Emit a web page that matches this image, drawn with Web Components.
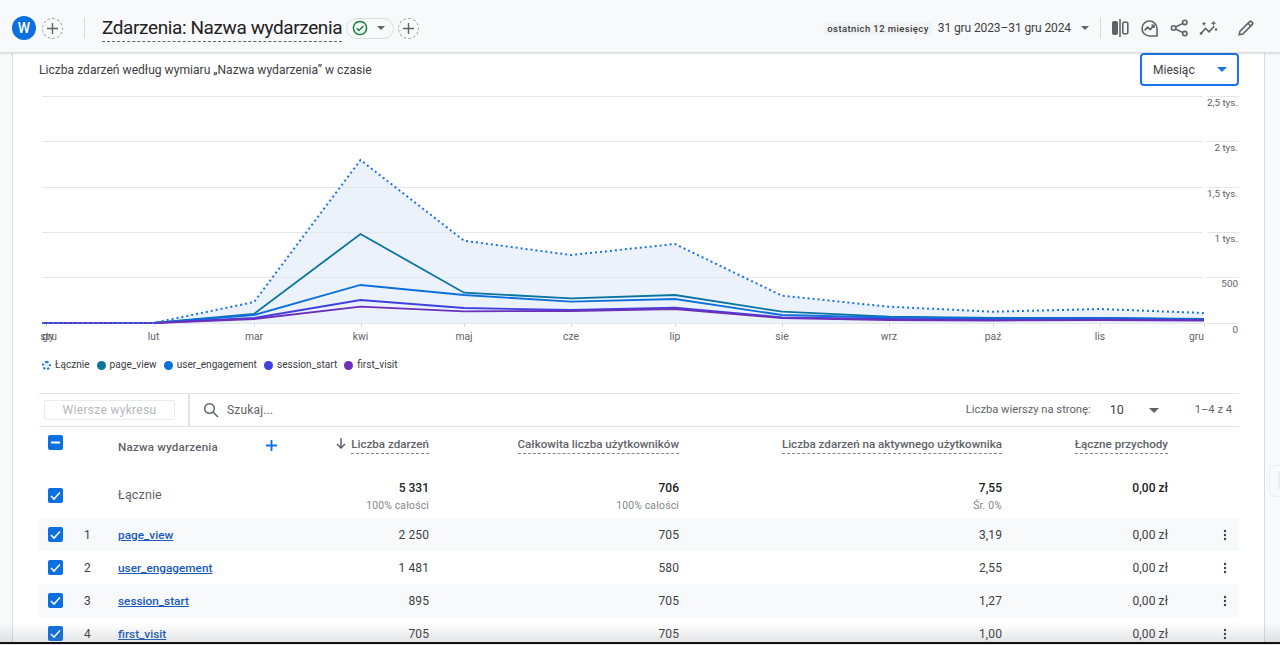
<!DOCTYPE html>
<html lang="pl">
<head>
<meta charset="utf-8">
<title>Zdarzenia</title>
<style>
  html, body { margin: 0; height: 100%; overflow: hidden; background: #f8f9fa; }
  body { font-family: Roboto, "Liberation Sans", sans-serif; color: #3c4043; }
</style>
</head>
<body>
<ga-app>
  <ga-header slot="header"></ga-header>
  <ga-card>
    <ga-chart-head>Liczba zdarzeń według wymiaru „Nazwa wydarzenia” w czasie</ga-chart-head>
    <ga-chart></ga-chart>
    <ga-legend></ga-legend>
    <ga-toolbar></ga-toolbar>
    <ga-table-head></ga-table-head>
    <ga-total-row events="5 331" users="706" rate="7,55" revenue="0,00 zł"></ga-total-row>
    <ga-row rank="1" events="2 250" users="705" rate="3,19" revenue="0,00 zł">page_view</ga-row>
    <ga-row rank="2" events="1 481" users="580" rate="2,55" revenue="0,00 zł">user_engagement</ga-row>
    <ga-row rank="3" events="895" users="705" rate="1,27" revenue="0,00 zł">session_start</ga-row>
    <ga-row rank="4" events="705" users="705" rate="1,00" revenue="0,00 zł">first_visit</ga-row>
  </ga-card>
</ga-app>

<script>
const COLUMNS = '40px 39px 162px 149px 250px 323px 166px 71px';
const caret = (c = '#5f6368') => `<svg width="10" height="5" viewBox="0 0 10 5"><path d="M0 0h10L5 5z" fill="${c}"/></svg>`;

class GaApp extends HTMLElement {
    constructor() {
        super();
        this.attachShadow({ mode: 'open' }).innerHTML = `
        <style>
            :host { display: flex; flex-direction: column; height: 645px; position: relative; overflow: hidden; }
            main { flex: 1; display: flex; padding: 0 15px 0 12px; min-height: 0; }
            .fade { position: absolute; left: 0; right: 0; bottom: 0; height: 22px;
                background: linear-gradient(rgba(120,124,130,0) 0, rgba(120,124,130,.2) 19px, #111 19.5px, #111 21px, #e8e8e8 21px); }
            .tab { position: absolute; right: 0; top: 465px; width: 11px; height: 32px; box-sizing: border-box; padding: 5px 0 7px 8px;
                border: 1px solid #eceef0; border-right: 0; border-radius: 6px 0 0 6px; }
            .tab i { display: block; height: 100%; background: #eceef0; }
        </style>
        <slot name="header"></slot>
        <main><slot></slot></main>
        <div class="tab"><i></i></div>
        <div class="fade"></div>`;
    }
}

class GaPlus extends HTMLElement {
    constructor() {
        super();
        this.attachShadow({ mode: 'open' }).innerHTML = `
        <style>
            :host { display: flex; align-items: center; justify-content: center; width: 21px; height: 21px; box-sizing: border-box;
                border: 1px dashed #9aa0a6; border-radius: 50%; }
        </style>
        <svg width="13" height="13" viewBox="0 0 13 13"><path d="M6.500 1v11M1 6.500h11" stroke="#5f6368" stroke-width="1.400" fill="none"/></svg>`;
    }
}

class GaHeader extends HTMLElement {
    constructor() {
        super();
        this.attachShadow({ mode: 'open' }).innerHTML = `
        <style>
            :host { display: flex; align-items: center; height: 53px; box-sizing: border-box; padding: 4px 0 0 12px;
                background: #f8f9fa; border-bottom: 1px solid #dadce0; box-shadow: 0 1px 2px rgba(60,64,67,.15); position: relative; z-index: 2; }
            .avatar { width: 24px; height: 24px; border-radius: 50%; background: #0b6fe0; color: #fff; font: 500 14px/24px Roboto, sans-serif; text-align: center; }
            ga-plus { margin-left: 6px; }
            .div { width: 1px; height: 20px; background: #dadce0; }
            .div.a { margin: 0 17px 0 21px; }
            .title { font: 400 19px/26px Roboto, sans-serif; color: #202124; border-bottom: 1px dashed #5f6368; margin-top: 1px; letter-spacing: -.4px; white-space: nowrap; }
            .pill { display: flex; align-items: center; width: 48px; height: 21px; box-sizing: border-box; margin-left: 4px; padding-left: 5px;
                border: 1px solid #dadce0; border-radius: 11px; }
            .pill svg:last-child { margin-left: 9px; }
            .pill + ga-plus { margin-left: 4px; }
            .right { margin-left: auto; display: flex; align-items: center; }
            .chip { font: 500 9.500px/13px Roboto, sans-serif; letter-spacing: .4px; background: #f1f3f4; color: #3c4043; padding: 0 3px; white-space: nowrap; }
            .date { font: 400 12px/16px Roboto, sans-serif; letter-spacing: -.1px; color: #3c4043; margin-left: 6px; white-space: nowrap; }
            .caret { margin: 0 11px 0 10px; display: flex; }
            .icons { display: flex; align-items: center; padding-right: 26px; }
            .icons svg { display: block; fill: none; stroke: #5f6368; stroke-width: 1.600; }
            .i1 { margin-left: 11px; } .i2 { margin-left: 12px; } .i3 { margin-left: 12px; } .i4 { margin-left: 10px; } .i5 { margin-left: 20px; }
        </style>
        <div class="avatar">W</div>
        <ga-plus></ga-plus>
        <div class="div a"></div>
        <div class="title">Zdarzenia: Nazwa wydarzenia</div>
        <div class="pill">
            <svg width="16" height="16" viewBox="0 0 16 16" fill="none"><circle cx="8" cy="8" r="6.600" stroke="#188038" stroke-width="1.500"/><path d="M4.700 8.200l2.300 2.300 4.300-4.500" stroke="#188038" stroke-width="1.500"/></svg>
            <svg width="8" height="4" viewBox="0 0 8 4"><path d="M0 0h8L4 4z" fill="#5f6368"/></svg>
        </div>
        <ga-plus></ga-plus>
        <div class="right">
            <span class="chip">ostatnich 12 miesięcy</span>
            <span class="date">31 gru 2023–31 gru 2024</span>
            <span class="caret"><svg width="8" height="4" viewBox="0 0 8 4"><path d="M0 0h8L4 4z" fill="#5f6368"/></svg></span>
            <div class="div"></div>
            <div class="icons">
                <svg class="i1" width="17" height="18" viewBox="0 0 17 18"><rect x="0.500" y="2.500" width="5" height="13" rx="1" fill="#5f6368" stroke="#5f6368" stroke-width="1"/><path d="M8 0v18"/><rect x="10.800" y="3.300" width="5" height="11.400" rx="1"/></svg>
                <svg class="i2" width="17" height="17" viewBox="0 0 17 17"><path d="M16 16H8.500A7.500 7.500 0 1 1 16 8.500z"/><path d="M3.600 10.400l3-3.200 2.600 2.400 3.600-4M10.400 5.400h2.600V8"/></svg>
                <svg class="i3" width="19" height="18" viewBox="0 0 19 18"><circle cx="14.800" cy="3.400" r="2.200"/><circle cx="3.600" cy="9" r="2.200"/><circle cx="14.800" cy="14.600" r="2.200"/><path d="M5.600 8l7.200-3.600M5.600 10l7.200 3.600"/></svg>
                <svg class="i4" width="19" height="17" viewBox="0 0 19 17"><path d="M2 13.500l4.500-5 3.600 3.400 5-5.600"/><path d="M14.500 0.500l.8 2 2 .8-2 .8-.8 2-.8-2-2-.8 2-.8z" fill="#5f6368" stroke="none"/><path d="M5 1.500l.7 1.600 1.600.7-1.600.7-.7 1.600-.7-1.600-1.600-.7 1.600-.7z" fill="#5f6368" stroke="none"/><circle cx="2" cy="13.500" r="1.300" fill="#5f6368" stroke="none"/><circle cx="17" cy="9.500" r="1.200" fill="#5f6368" stroke="none"/></svg>
                <svg class="i5" width="16" height="16" viewBox="0 0 16 16"><path d="M1.200 14.800l.8-3.600L11.600 1.600a1.300 1.300 0 0 1 1.800 0l1 1a1.300 1.300 0 0 1 0 1.800L4.800 14z"/><path d="M10 3.300l2.700 2.700"/></svg>
            </div>
        </div>`;
    }
}

class GaCard extends HTMLElement {
    constructor() {
        super();
        this.attachShadow({ mode: 'open' }).innerHTML = `
        <style>
            :host { display: block; flex: 1; min-width: 0; background: #fff; border: solid #dadce0; border-width: 0 1px; overflow: hidden; }
        </style>
        <slot></slot>`;
    }
}

class GaChartHead extends HTMLElement {
    constructor() {
        super();
        this.attachShadow({ mode: 'open' }).innerHTML = `
        <style>
            :host { display: flex; justify-content: space-between; height: 33px; padding: 0 25px 0 26px; align-items: center; font: 400 12.100px/16px Roboto, sans-serif; color: #3c4043; }
            .select { width: 99px; height: 33px; box-sizing: border-box; border: 2px solid #1a73e8; border-radius: 4px; display: flex; align-items: center; justify-content: space-between;
                padding: 0 10px 0 11px; font-size: 12px; color: #3c4043; }
        </style>
        <span><slot></slot></span>
        <div class="select"><span>Miesiąc</span>${caret('#1a73e8')}</div>`;
    }
}

class GaChart extends HTMLElement {
    constructor() {
        super();
        const xs = [42, 153.500, 254, 360.500, 464, 571, 675, 782, 889, 993, 1100, 1204];
        const series = {
            first_visit: ['#6b2fb8', [323, 323, 319, 306.700, 311.300, 311, 309, 318, 320, 320.500, 320, 320.500]],
            session_start: ['#4040e0', [323, 323, 318, 300, 308, 310, 307.700, 317.300, 319, 320, 319.500, 320]],
            user_engagement: ['#0b6fdc', [323, 323, 315, 285, 295, 301.700, 299, 315, 317.500, 318.500, 318, 319.500]],
            page_view: ['#0a74a0', [323, 323, 314, 234, 292.700, 298.300, 295, 311.700, 316.700, 318, 318, 319]],
        };
        const total = [323, 323, 302, 160, 240.700, 255, 244, 295.700, 306.700, 311.700, 309, 313];
        const pts = (ys) => ys.map((y, i) => `${xs[i]},${y}`).join(' ');
        const grid = [96, 141, 187, 232, 277, 323];
        const yLabels = ['2,5 tys.', '2 tys.', '1,5 tys.', '1 tys.', '500', '0'];
        const ticks = [46, 153.500, 254, 360.500, 464, 571, 675, 782, 889, 993, 1100, 1204];
        const months = ['lut', 'mar', 'kwi', 'maj', 'cze', 'lip', 'sie', 'wrz', 'paź', 'lis'];
        const lines = ['page_view', 'user_engagement', 'session_start', 'first_visit']
            .map((k) => `<polyline points="${pts(series[k][1])}" fill="none" stroke="${series[k][0]}" stroke-width="1.800"/>`).join('');
        this.attachShadow({ mode: 'open' }).innerHTML = `
        <style>
            :host { display: block; height: 262px; }
            svg { display: block; }
            text { font: 400 10.300px Roboto, sans-serif; fill: #5f6368; }
            text.y { font-size: 9.900px; }
        </style>
        <svg width="1251" height="262" viewBox="13 86 1251 262">
            <polygon points="42,323 ${pts(total)} 1204,323" fill="#ebf2fc"/>
            ${grid.map((y) => `<path d="M42 ${y + .5}H1203M1207 ${y + .5}H1239" stroke="#e4e6ea"/>`).join('')}
            ${ticks.map((x) => `<path d="M${Math.round(x) + .5} 323v4" stroke="#dadce0"/>`).join('')}
            ${yLabels.map((t, i) => `<text class="y" x="1238" y="${grid[i] + 10}" text-anchor="end">${t}</text>`).join('')}
            <text x="47" y="340" text-anchor="middle">sty</text>
            <text x="49.500" y="340" text-anchor="middle">gru</text>
            ${months.map((t, i) => `<text x="${ticks[i + 1]}" y="340" text-anchor="middle">${t}</text>`).join('')}
            <text x="1204" y="340" text-anchor="end">gru</text>
            ${lines}
            <polyline points="${pts(total)}" fill="none" stroke="#1a73e8" stroke-width="2" stroke-dasharray="2 3"/>
        </svg>`;
    }
}

class GaLegend extends HTMLElement {
    constructor() {
        super();
        const items = [['page_view', '#0a74a0'], ['user_engagement', '#0b6fdc'], ['session_start', '#3f3fe0'], ['first_visit', '#6b2fb8']];
        this.attachShadow({ mode: 'open' }).innerHTML = `
        <style>
            :host { display: flex; align-items: center; height: 45px; padding: 0 0 11px 29px; box-sizing: border-box; font: 400 10.100px/14px Roboto, sans-serif; color: #3c4043; gap: 7px; }
            .it { display: flex; align-items: center; gap: 4px; white-space: nowrap; }
            i { width: 9px; height: 9px; border-radius: 50%; display: block; box-sizing: border-box; }
            .tot { border: 2px dotted #1a73e8; background: #eaf1fb; }
        </style>
        <div class="it"><i class="tot"></i>Łącznie</div>
        ${items.map(([n, c]) => `<div class="it"><i style="background:${c}"></i>${n}</div>`).join('')}`;
    }
}

class GaToolbar extends HTMLElement {
    constructor() {
        super();
        this.attachShadow({ mode: 'open' }).innerHTML = `
        <style>
            :host { display: flex; align-items: stretch; height: 34px; box-sizing: border-box; margin: 0 25px 0 26px; border: solid #e0e2e5; border-width: 1px 0; font: 400 12px/16px Roboto, sans-serif; color: #5f6368; }
            .btn-wrap { width: 151px; box-sizing: border-box; padding-left: 5px; display: flex; align-items: center; border-right: 2px solid #e0e2e5; }
            .btn { width: 131px; height: 20px; box-sizing: border-box; border: 1px solid #e8eaed; border-radius: 2px; color: #b4b8bc; text-align: center; line-height: 18px; letter-spacing: .3px; }
            .search { display: flex; align-items: center; gap: 8px; padding-left: 13px; }
            .right { margin-left: auto; display: flex; align-items: center; padding-right: 7px; font-size: 11.200px; }
            .n { font-size: 12.500px; color: #3c4043; margin-left: 19px; width: 39px; }
            .c { display: flex; margin-right: 36px; }
            .s { letter-spacing: .2px; }
        </style>
        <div class="btn-wrap"><div class="btn">Wiersze wykresu</div></div>
        <div class="search">
            <svg width="16" height="16" viewBox="0 0 16 16" fill="none" stroke="#5f6368" stroke-width="1.500"><circle cx="6.500" cy="6.500" r="4.800"/><path d="M10 10l5 5"/></svg>
            <span class="s">Szukaj...</span>
        </div>
        <div class="right">
            <span>Liczba wierszy na stronę:</span><span class="n">10</span>
            <span class="c">${caret()}</span><span>1–4 z 4</span>
        </div>`;
    }
}

class GaCheckbox extends HTMLElement {
    constructor() {
        super();
        const mark = this.hasAttribute('minus')
            ? '<path d="M3 7.500h9" stroke="#fff" stroke-width="2"/>'
            : '<path d="M3 8l3 3 6-6.500" stroke="#fff" stroke-width="1.600" fill="none"/>';
        this.attachShadow({ mode: 'open' }).innerHTML = `
        <style>:host { display: block; width: 15px; height: 15px; } svg { display: block; }</style>
        <svg width="15" height="15" viewBox="0 0 15 15"><rect width="15" height="15" rx="2" fill="#0b6fe0"/>${mark}</svg>`;
    }
}

class GaTableHead extends HTMLElement {
    constructor() {
        super();
        const h = (t) => `<div class="h"><span>${t}</span></div>`;
        this.attachShadow({ mode: 'open' }).innerHTML = `
        <style>
            :host { display: grid; grid-template-columns: ${COLUMNS}; height: 38px; margin: 0 25px 0 26px; font: 500 11.600px/16px Roboto, sans-serif; color: #5f6368; }
            .c { padding: 8px 0 0 9px; }
            .n { grid-column: 3; padding-top: 12px; display: flex; letter-spacing: .2px; }
            .plus { margin: 1px 0 0 48px; }
            .h { display: flex; justify-content: flex-end; align-items: flex-start; padding-top: 9px; gap: 5px; }
            .h span { border-bottom: 1px dashed #80868b; padding-bottom: 1px; white-space: nowrap; }
            .h svg { margin-top: 2px; }
        </style>
        <div class="c"><ga-checkbox minus></ga-checkbox></div>
        <div class="n"><span>Nazwa wydarzenia</span><svg class="plus" width="11" height="11" viewBox="0 0 11 11"><path d="M5.500 0v11M0 5.500h11" stroke="#0b6fe0" stroke-width="1.800"/></svg></div>
        <div class="h"><svg width="10" height="11" viewBox="0 0 10 11" fill="none" stroke="#5f6368" stroke-width="1.500"><path d="M5 0v10M1 6l4 4 4-4"/></svg><span>Liczba zdarzeń</span></div>
        ${h('Całkowita liczba użytkowników')}
        ${h('Liczba zdarzeń na aktywnego użytkownika')}
        ${h('Łączne przychody')}`;
    }
}

class GaTotalRow extends HTMLElement {
    constructor() {
        super();
        const a = (k) => this.getAttribute(k);
        const v = (t, s) => `<div class="v"><b>${t}</b>${s ? `<small>${s}</small>` : ''}</div>`;
        this.attachShadow({ mode: 'open' }).innerHTML = `
        <style>
            :host { display: grid; grid-template-columns: ${COLUMNS}; height: 53px; margin: 0 25px 0 26px; font: 400 12px/16px Roboto, sans-serif; color: #3c4043; }
            .c { padding: 23px 0 0 9px; }
            .n { grid-column: 3; padding-top: 22px; font-size: 12.500px; letter-spacing: .15px; color: #5f6368; }
            .v { text-align: right; padding-top: 15px; }
            b { display: block; font-weight: 500; color: #202124; }
            small { display: block; font-size: 10.300px; color: #80868b; margin-top: 2px; letter-spacing: .2px; }
        </style>
        <div class="c"><ga-checkbox></ga-checkbox></div>
        <div class="n">Łącznie</div>
        ${v(a('events'), '100% całości')}
        ${v(a('users'), '100% całości')}
        ${v(a('rate'), 'Śr. 0%')}
        ${v(a('revenue'))}`;
    }
}

class GaRow extends HTMLElement {
    constructor() {
        super();
        const a = (k) => this.getAttribute(k);
        const odd = Number(a('rank')) % 2 === 1;
        this.attachShadow({ mode: 'open' }).innerHTML = `
        <style>
            :host { display: grid; grid-template-columns: ${COLUMNS}; align-items: center; height: 33px; margin: 0 25px 0 26px; font: 400 12px/16px Roboto, sans-serif; color: #3c4043;
                background: ${odd ? '#f8f9fa' : '#fff'}; letter-spacing: .1px; }
            .c { padding-left: 9px; }
            .r { padding-left: 5px; }
            .l { color: #185abc; font-weight: 500; font-size: 11.800px; text-decoration: underline; letter-spacing: 0; }
            .v { text-align: right; }
            .k { display: flex; justify-content: flex-end; padding-right: 10px; }
            svg { display: block; }
        </style>
        <div class="c"><ga-checkbox></ga-checkbox></div>
        <div class="r">${a('rank')}</div>
        <div class="l"><slot></slot></div>
        <div class="v">${a('events')}</div>
        <div class="v">${a('users')}</div>
        <div class="v">${a('rate')}</div>
        <div class="v">${a('revenue')}</div>
        <div class="k"><svg width="8" height="12" viewBox="0 0 8 12"><g fill="#3c4043"><circle cx="4" cy="2" r="1.200"/><circle cx="4" cy="6" r="1.200"/><circle cx="4" cy="10" r="1.200"/></g></svg></div>`;
    }
}

customElements.define('ga-plus', GaPlus);
customElements.define('ga-checkbox', GaCheckbox);
customElements.define('ga-header', GaHeader);
customElements.define('ga-card', GaCard);
customElements.define('ga-chart-head', GaChartHead);
customElements.define('ga-chart', GaChart);
customElements.define('ga-legend', GaLegend);
customElements.define('ga-toolbar', GaToolbar);
customElements.define('ga-table-head', GaTableHead);
customElements.define('ga-total-row', GaTotalRow);
customElements.define('ga-row', GaRow);
customElements.define('ga-app', GaApp);
</script>
</body>
</html>
